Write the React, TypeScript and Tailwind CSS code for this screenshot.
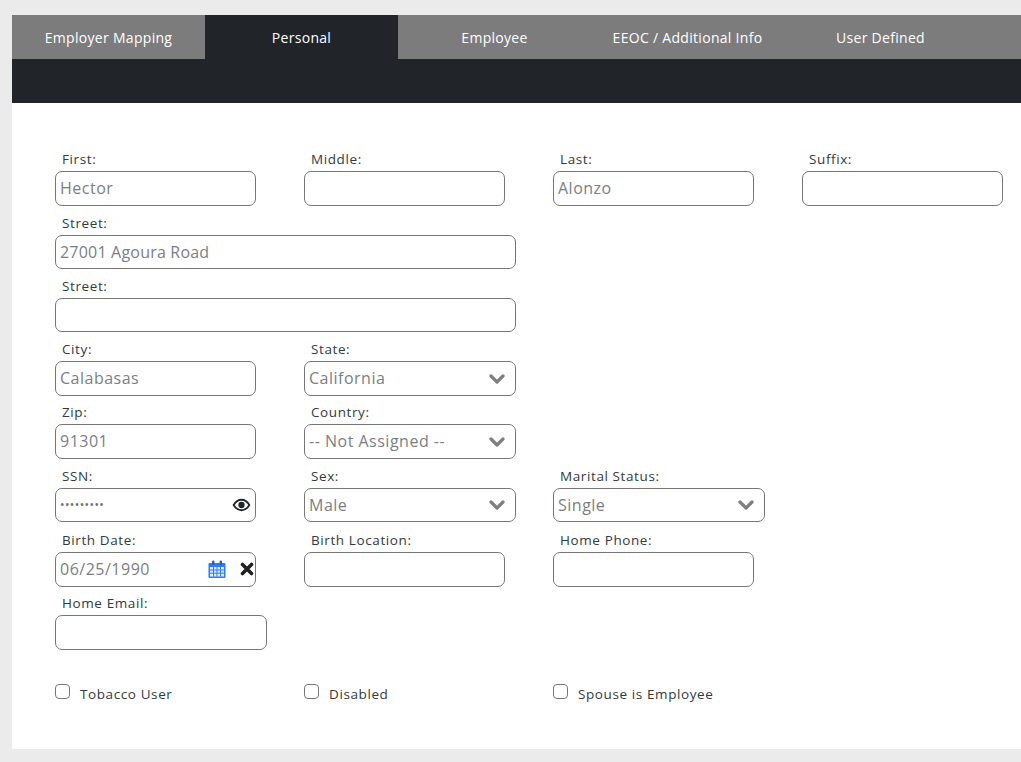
import React from "react";

const font = "font-['Open_Sans',sans-serif]";

function Label({ text }: { text: string }) {
  return <div className="h-[17px] pl-[7px] text-[13.5px] leading-[11px] tracking-[0.6px] text-[#333a40]">{text}</div>;
}

function Box({ w, h = "h-[35px]", children }: { w: string; h?: string; children?: React.ReactNode }) {
  return (
    <div className={`${w} ${h} flex items-center rounded-[7px] border border-[#767676] bg-white pb-[1px] pl-[4px] text-[16px] tracking-[0.5px] text-[#7b7f83]`}>
      {children}
    </div>
  );
}

function Chevron() {
  return (
    <svg viewBox="0 0 16 10" className="ml-auto mr-[10px] mt-[1px] h-[10px] w-[16px]" fill="none" stroke="#7f7f7f" strokeWidth="3.2" strokeLinecap="round" strokeLinejoin="round">
      <path d="M2 2l6 6 6-6" />
    </svg>
  );
}

function Field({ label, w = "w-[201px]", h, value, select, children }: { label: string; w?: string; h?: string; value?: string; select?: boolean; children?: React.ReactNode }) {
  return (
    <div className="w-[249px] shrink-0">
      <Label text={label} />
      <Box w={w} h={h}>
        {value && <span>{value}</span>}
        {select && <Chevron />}
        {children}
      </Box>
    </div>
  );
}

function Check({ label }: { label: string }) {
  return (
    <div className="flex w-[249px] shrink-0 items-start">
      <div className="h-[15px] w-[15px] rounded-[4px] border border-[#767676] bg-white" />
      <span className="ml-[10px] text-[13.5px] leading-[20px] tracking-[0.6px] text-[#333a40]">{label}</span>
    </div>
  );
}

export default function App() {
  const tabs = ["Employer Mapping", "Personal", "Employee", "EEOC / Additional Info", "User Defined"];
  return (
    <div className={`h-[762px] w-[1021px] overflow-hidden bg-[#ebebeb] pl-[12px] pt-[15px] ${font}`}>
      <div className="h-[734px] w-[1009px] overflow-hidden bg-white">
        <div className="flex h-[44px] bg-[#7c7c7c]">
          {tabs.map((t) => (
            <div
              key={t}
              className={`flex w-[193px] shrink-0 items-center justify-center pt-[1px] text-[14px] font-medium tracking-[0.3px] text-white ${t === "Personal" ? "bg-[#212529]" : ""}`}
            >
              {t}
            </div>
          ))}
        </div>
        <div className="h-[44px] bg-[#212529]" />
        <div className="pl-[43px] pt-[51px]">
          <div className="flex">
            <Field label="First:" value="Hector" />
            <Field label="Middle:" />
            <Field label="Last:" value="Alonzo" />
            <Field label="Suffix:" />
          </div>
          <div className="mt-[12px]">
            <Label text="Street:" />
            <Box w="w-[461px]" h="h-[34px]"><span className="tracking-[0.2px]">27001 Agoura Road</span></Box>
          </div>
          <div className="mt-[12px]">
            <Label text="Street:" />
            <Box w="w-[461px]" h="h-[34px]" />
          </div>
          <div className="mt-[12px] flex">
            <Field label="City:" value="Calabasas" />
            <Field label="State:" w="w-[212px]" value="California" select />
          </div>
          <div className="mt-[11px] flex">
            <Field label="Zip:" value="91301" />
            <Field label="Country:" w="w-[212px]" value="-- Not Assigned --" select />
          </div>
          <div className="mt-[12px] flex">
            <Field label="SSN:" h="h-[34px]">
              <span className="text-[12px] tracking-[0.4px] text-[#6f6f6f]">•••••••••</span>
              <svg viewBox="0 0 24 24" className="ml-auto mr-[4px] mt-[1px] h-[18px] w-[19px]" fill="none" stroke="#212529" strokeWidth="2.4">
                <path d="M1.5 12C4.2 7.4 7.8 5 12 5s7.8 2.4 10.5 7c-2.7 4.6-6.3 7-10.5 7s-7.8-2.4-10.5-7z" />
                <circle cx="12" cy="12" r="4.2" fill="#212529" stroke="none" />
              </svg>
            </Field>
            <Field label="Sex:" w="w-[212px]" h="h-[34px]" value="Male" select />
            <Field label="Marital Status:" w="w-[212px]" h="h-[34px]" value="Single" select />
          </div>
          <div className="mt-[13px] flex">
            <Field label="Birth Date:">
              <span>06/25/1990</span>
              <svg viewBox="0 0 18 18" className="ml-auto h-[18px] w-[18px]">
                <path d="M1.5 3h15a1 1 0 0 1 1 1v13a1 1 0 0 1-1 1h-15a1 1 0 0 1-1-1V4a1 1 0 0 1 1-1z" fill="#2f7bf0" />
                <rect x="4" y="0.5" width="2.4" height="4.5" rx="1" fill="#1e5fd0" />
                <rect x="11.6" y="0.5" width="2.4" height="4.5" rx="1" fill="#1e5fd0" />
                <path d="M2 7h14v9.5H2z" fill="#dce8fc" />
                <path d="M5.5 7v9.5M9 7v9.5M12.5 7v9.5M2 10h14M2 13.2h14" stroke="#2f7bf0" strokeWidth="1" />
              </svg>
              <svg viewBox="0 0 14 14" className="ml-[14px] mr-[1px] h-[14px] w-[14px]" fill="none" stroke="#212121" strokeWidth="3.6" strokeLinecap="round">
                <path d="M2.5 2.5l9 9M11.5 2.5l-9 9" />
              </svg>
            </Field>
            <Field label="Birth Location:" />
            <Field label="Home Phone:" />
          </div>
          <div className="mt-[11px]">
            <Label text="Home Email:" />
            <Box w="w-[212px]" />
          </div>
          <div className="mt-[34px] flex">
            <Check label="Tobacco User" />
            <Check label="Disabled" />
            <Check label="Spouse is Employee" />
          </div>
        </div>
      </div>
    </div>
  );
}
